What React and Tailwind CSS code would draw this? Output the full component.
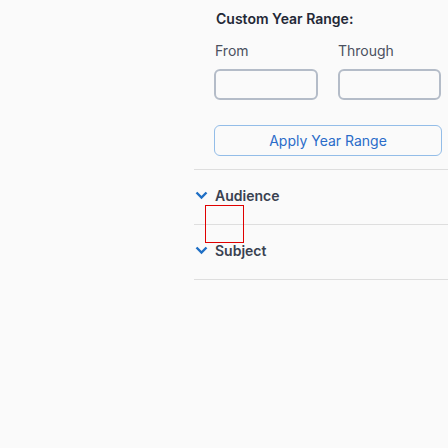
import React from "react";

function Chevron() {
  return (
    <svg className="-ml-[1px] h-[9px] w-[13px] text-[#1f6fc5]" viewBox="0 0 13 9" fill="none" stroke="currentColor" strokeWidth={2.4}>
      <path d="M1.5 1.5l5 5 5-5" />
    </svg>
  );
}

function Section({ title }) {
  return (
    <div className="flex h-[55px] items-center border-b border-[#dedede] pb-[4px]">
      <button className="ml-[2px] flex items-center gap-[7px] text-[14px] font-semibold text-[#394150]">
        <Chevron />
        <span>{title}</span>
      </button>
    </div>
  );
}

export default function App() {
  return (
    <div
      className="relative h-[448px] w-[448px] overflow-hidden bg-[#fafafa]"
      style={{ fontFamily: "Inter, 'Noto Sans', sans-serif" }}
    >
      <div className="ml-[194px]">
        <div className="border-b border-[#dedede] pb-[13px] pl-[20px] pt-[11px]">
          <h3 className="ml-[2px] text-[14px] font-semibold leading-[16px] text-[#232836]">
            Custom Year Range:
          </h3>
          <div className="mt-[16px] flex gap-[20px]">
            <label className="flex w-[104px] flex-col">
              <span className="ml-[1px] text-[14px] leading-[16px] text-[#4a5060]">From</span>
              <input className="mt-[10px] h-[31px] rounded-[6px] border-2 border-[#b4bcc8] bg-transparent" />
            </label>
            <label className="flex w-[103px] flex-col">
              <span className="text-[14px] leading-[16px] text-[#4a5060]">Through</span>
              <input className="mt-[10px] h-[31px] rounded-[6px] border-2 border-[#b4bcc8] bg-transparent" />
            </label>
          </div>
          <button className="mt-[25px] h-[31px] w-[228px] rounded-[6px] border border-[#93bde8] text-[14px] text-[#2a6cc9]">
            Apply Year Range
          </button>
        </div>
        <Section title="Audience" />
        <Section title="Subject" />
      </div>
      <div className="absolute left-[205px] top-[205px] h-[38px] w-[39px] border border-[#e00000]" />
    </div>
  );
}
